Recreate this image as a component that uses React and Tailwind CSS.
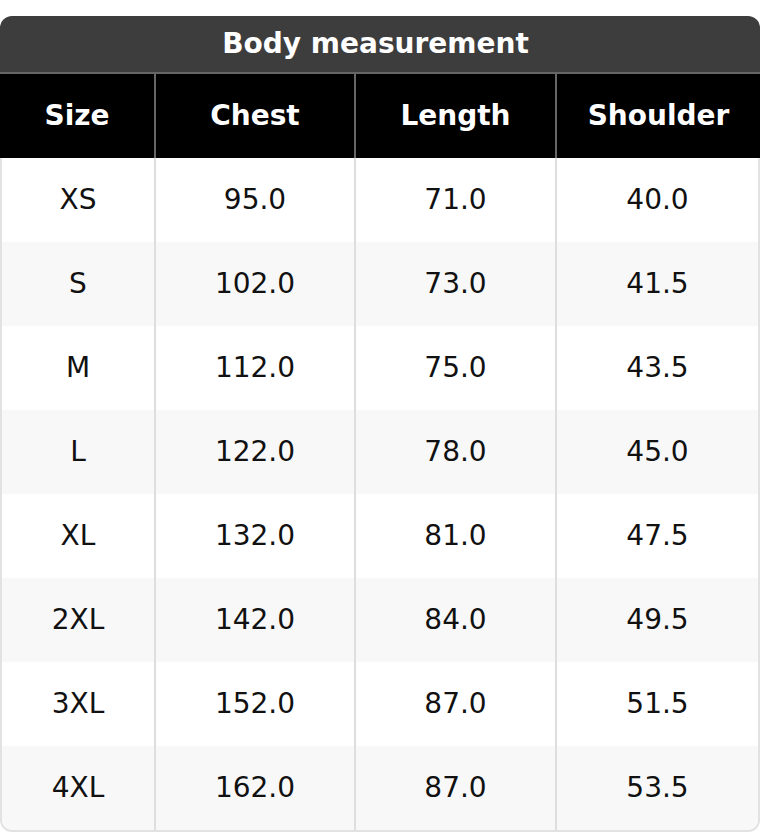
import React from 'react';

const rows = [
  ['XS', '95.0', '71.0', '40.0'],
  ['S', '102.0', '73.0', '41.5'],
  ['M', '112.0', '75.0', '43.5'],
  ['L', '122.0', '78.0', '45.0'],
  ['XL', '132.0', '81.0', '47.5'],
  ['2XL', '142.0', '84.0', '49.5'],
  ['3XL', '152.0', '87.0', '51.5'],
  ['4XL', '162.0', '87.0', '53.5'],
];

const headers = ['Size', 'Chest', 'Length', 'Shoulder'];

function App() {
  return (
    <div className="w-[760px] h-[832px] bg-white pt-[16px] font-['DejaVu_Sans',sans-serif]">
      <div className="rounded-t-[12px] overflow-hidden">
        <div className="h-[58px] bg-[#3d3d3d] border-b-2 border-[#666] flex items-center justify-center pr-[9px] text-white text-[28px] font-bold">
          Body measurement
        </div>
        <div className="grid grid-cols-[154px_200px_201px_1fr] h-[84px] bg-black text-white text-[28px] font-bold">
          {headers.map((h, i) => (
            <div
              key={h}
              className={`flex items-center justify-center ${i > 0 ? 'border-l-2 border-[#666]' : ''}`}
            >
              {h}
            </div>
          ))}
        </div>
      </div>
      <div className="border-x-2 border-b-2 border-[#e2e2e2] rounded-b-[12px] overflow-hidden">
        {rows.map((r, idx) => (
          <div
            key={r[0]}
            className={`grid grid-cols-[152px_200px_201px_1fr] h-[84px] text-[28px] text-[#111] ${idx % 2 === 1 ? 'bg-[#f8f8f8]' : 'bg-white'}`}
          >
            {r.map((v, i) => (
              <div
                key={i}
                className={`flex items-center justify-center ${i > 0 ? 'border-l-2 border-[#dedede]' : ''}`}
              >
                {v}
              </div>
            ))}
          </div>
        ))}
      </div>
    </div>
  );
}

export default App;
